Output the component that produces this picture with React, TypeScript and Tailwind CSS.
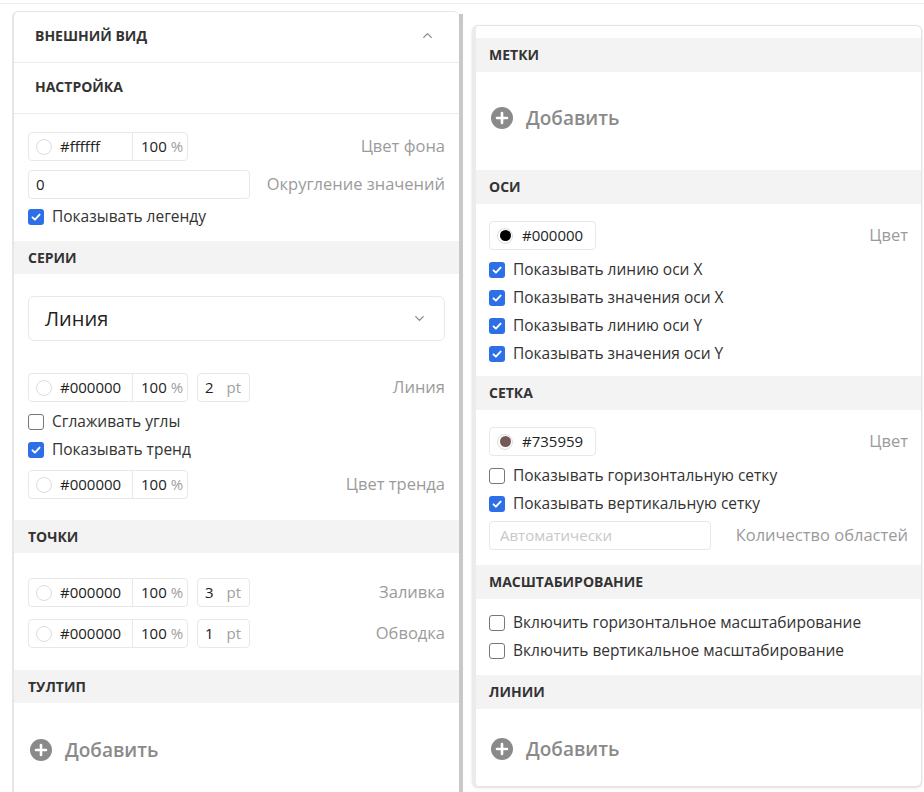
import { ChevronUp, ChevronDown } from 'lucide-react'

// Two side-by-side chart settings panels

function Band({ title, right }: { title: string; right?: boolean }) {
  return (
    <div
      className={`flex items-center bg-[#f3f3f3] pb-px text-[14px] font-bold uppercase text-[#333] ${
        right ? 'h-[34px] px-[13px]' : 'h-[33px] px-[14px]'
      }`}
    >
      {title}
    </div>
  )
}

function CheckIcon({ checked }: { checked: boolean }) {
  if (!checked) {
    return <span className="h-4 w-4 shrink-0 rounded-[3px] border-[1.5px] border-[#777] bg-white" />
  }
  return (
    <span className="flex h-4 w-4 shrink-0 items-center justify-center rounded-[3px] bg-[#2c6fe6]">
      <svg width="12" height="12" viewBox="0 0 12 12" fill="none">
        <path d="M2.5 6.3l2.4 2.4L9.6 3.6" stroke="white" strokeWidth="1.9" strokeLinecap="round" strokeLinejoin="round" />
      </svg>
    </span>
  )
}

function Check({ label, checked }: { label: string; checked: boolean }) {
  return (
    <div className="flex h-[28px] items-center gap-2 text-[15.5px] text-[#333]">
      <CheckIcon checked={checked} />
      <span>{label}</span>
    </div>
  )
}

function ColorOpacity({ hex }: { hex: string }) {
  return (
    <div className="flex h-[29px] w-[160px] shrink-0 rounded border border-[#e8e8e8] text-[15px] text-[#222]">
      <div className="flex flex-1 items-center gap-2 border-r border-[#e8e8e8] pl-[7px]">
        <span className="h-4 w-4 rounded-full border border-[#dcdcdc]" />
        <span>{hex}</span>
      </div>
      <div className="flex w-[54px] items-center pl-2">
        100<span className="ml-[4px] text-[#a0a0a0]">%</span>
      </div>
    </div>
  )
}

function PtBox({ value }: { value: string }) {
  return (
    <div className="ml-[9px] flex h-[29px] w-[53px] items-center rounded border border-[#e8e8e8] pl-[7px] pr-2 text-[15px]">
      <span className="text-[#222]">{value}</span>
      <span className="ml-auto text-[#a0a0a0]">pt</span>
    </div>
  )
}

function ColorDot({ hex, color }: { hex: string; color: string }) {
  return (
    <div className="flex h-[29px] w-[107px] items-center gap-[9px] rounded border border-[#e8e8e8] pl-[7px] text-[15px] text-[#222]">
      <span className="flex h-4 w-4 items-center justify-center rounded-full border border-[#dcdcdc]">
        <span className="h-[11px] w-[11px] rounded-full" style={{ backgroundColor: color }} />
      </span>
      <span>{hex}</span>
    </div>
  )
}

function Label({ children }: { children: string }) {
  return <span className="ml-auto text-[16.5px] text-[#9b9b9b]">{children}</span>
}

function AddButton() {
  return (
    <div className="ml-[2px] flex items-center gap-[13px] text-[19px] font-semibold text-[#8a8a8a]">
      <svg width="22" height="22" viewBox="0 0 22 22">
        <circle cx="11" cy="11" r="11" fill="#8a8a8a" />
        <path d="M11 6v10M6 11h10" stroke="white" strokeWidth="2.6" strokeLinecap="round" />
      </svg>
      <span>Добавить</span>
    </div>
  )
}

function LeftPanel() {
  return (
    <div className="ml-3 mt-[7px] flex w-[451px]">
      <div className="flex-1 rounded-t-md border-l-2 border-t border-[#e6e6e6] bg-white">
        <div className="flex h-[51px] items-center border-b border-[#ececec] pb-[3px] pl-[21px] pr-6 text-[14px] font-bold text-[#333]">
          ВНЕШНИЙ ВИД
          <ChevronUp size={15} strokeWidth={2} className="ml-auto text-[#888]" />
        </div>
        <div className="flex h-[51px] items-center border-b border-[#ececec] px-[21px] pb-[3px] text-[14px] font-bold text-[#333]">
          НАСТРОЙКА
        </div>

        <div className="px-[14px] pb-[10px] pt-[18px]">
          <div className="flex items-center">
            <ColorOpacity hex="#ffffff" />
            <Label>Цвет фона</Label>
          </div>
          <div className="mt-[9px] flex items-center">
            <div className="flex h-[29px] w-[222px] items-center rounded border border-[#e8e8e8] pl-[7px] text-[15px] text-[#222]">
              0
            </div>
            <Label>Округление значений</Label>
          </div>
          <div className="mt-1">
            <Check label="Показывать легенду" checked />
          </div>
        </div>

        <Band title="Серии" />
        <div className="px-[14px] pb-[21px] pt-[22px]">
          <div className="flex h-[45px] items-center rounded-md border border-[#e8e8e8] pl-4 pr-[17px] text-[20px] text-[#222]">
            Линия
            <ChevronDown size={15} strokeWidth={2} className="ml-auto text-[#888]" />
          </div>
          <div className="mt-[32px] flex items-center">
            <ColorOpacity hex="#000000" />
            <PtBox value="2" />
            <Label>Линия</Label>
          </div>
          <div className="mt-[6px]">
            <Check label="Сглаживать углы" checked={false} />
            <Check label="Показывать тренд" checked />
          </div>
          <div className="mt-[6px] flex items-center">
            <ColorOpacity hex="#000000" />
            <Label>Цвет тренда</Label>
          </div>
        </div>

        <Band title="Точки" />
        <div className="px-[14px] pb-[22px] pt-[25px]">
          <div className="flex items-center">
            <ColorOpacity hex="#000000" />
            <PtBox value="3" />
            <Label>Заливка</Label>
          </div>
          <div className="mt-[12px] flex items-center">
            <ColorOpacity hex="#000000" />
            <PtBox value="1" />
            <Label>Обводка</Label>
          </div>
        </div>

        <Band title="Тултип" />
        <div className="px-[14px] pb-10 pt-[33px]">
          <AddButton />
        </div>
      </div>
      <div className="mt-[3px] w-[4px] bg-[#c8c8c8]" />
    </div>
  )
}

function RightPanel() {
  return (
    <div className="ml-[9px] mt-[21px] h-[762px] w-[450px] rounded-md border border-l-4 border-[#e4e4e4] border-l-[#ebebeb] bg-white pt-3 shadow-sm">
      <Band title="Метки" right />
      <div className="h-[98px] px-[13px] pt-[32px]">
        <AddButton />
      </div>

      <Band title="Оси" right />
      <div className="px-[13px] pb-2 pt-[17px]">
        <div className="flex items-center">
          <ColorDot hex="#000000" color="#000000" />
          <Label>Цвет</Label>
        </div>
        <div className="mt-[6px]">
          <Check label="Показывать линию оси X" checked />
          <Check label="Показывать значения оси X" checked />
          <Check label="Показывать линию оси Y" checked />
          <Check label="Показывать значения оси Y" checked />
        </div>
      </div>

      <Band title="Сетка" right />
      <div className="px-[13px] pb-[15px] pt-[17px]">
        <div className="flex items-center">
          <ColorDot hex="#735959" color="#735959" />
          <Label>Цвет</Label>
        </div>
        <div className="mt-[6px]">
          <Check label="Показывать горизонтальную сетку" checked={false} />
          <Check label="Показывать вертикальную сетку" checked />
        </div>
        <div className="mt-[3px] flex items-center">
          <div className="flex h-[29px] w-[222px] items-center rounded border border-[#e8e8e8] pl-[10px] text-[15px] text-[#c8c8c8]">
            Автоматически
          </div>
          <Label>Количество областей</Label>
        </div>
      </div>

      <Band title="Масштабирование" right />
      <div className="px-[13px] py-[10px]">
        <Check label="Включить горизонтальное масштабирование" checked={false} />
        <Check label="Включить вертикальное масштабирование" checked={false} />
      </div>

      <Band title="Линии" right />
      <div className="px-[13px] pt-[26px]">
        <AddButton />
      </div>
    </div>
  )
}

export default function App() {
  return (
    <div className="h-[792px] w-[924px] overflow-hidden bg-white font-['Open_Sans',sans-serif]">
      <div className="h-[4px] border-b border-[#efefef]" />
      <div className="flex">
        <LeftPanel />
        <RightPanel />
      </div>
    </div>
  )
}
